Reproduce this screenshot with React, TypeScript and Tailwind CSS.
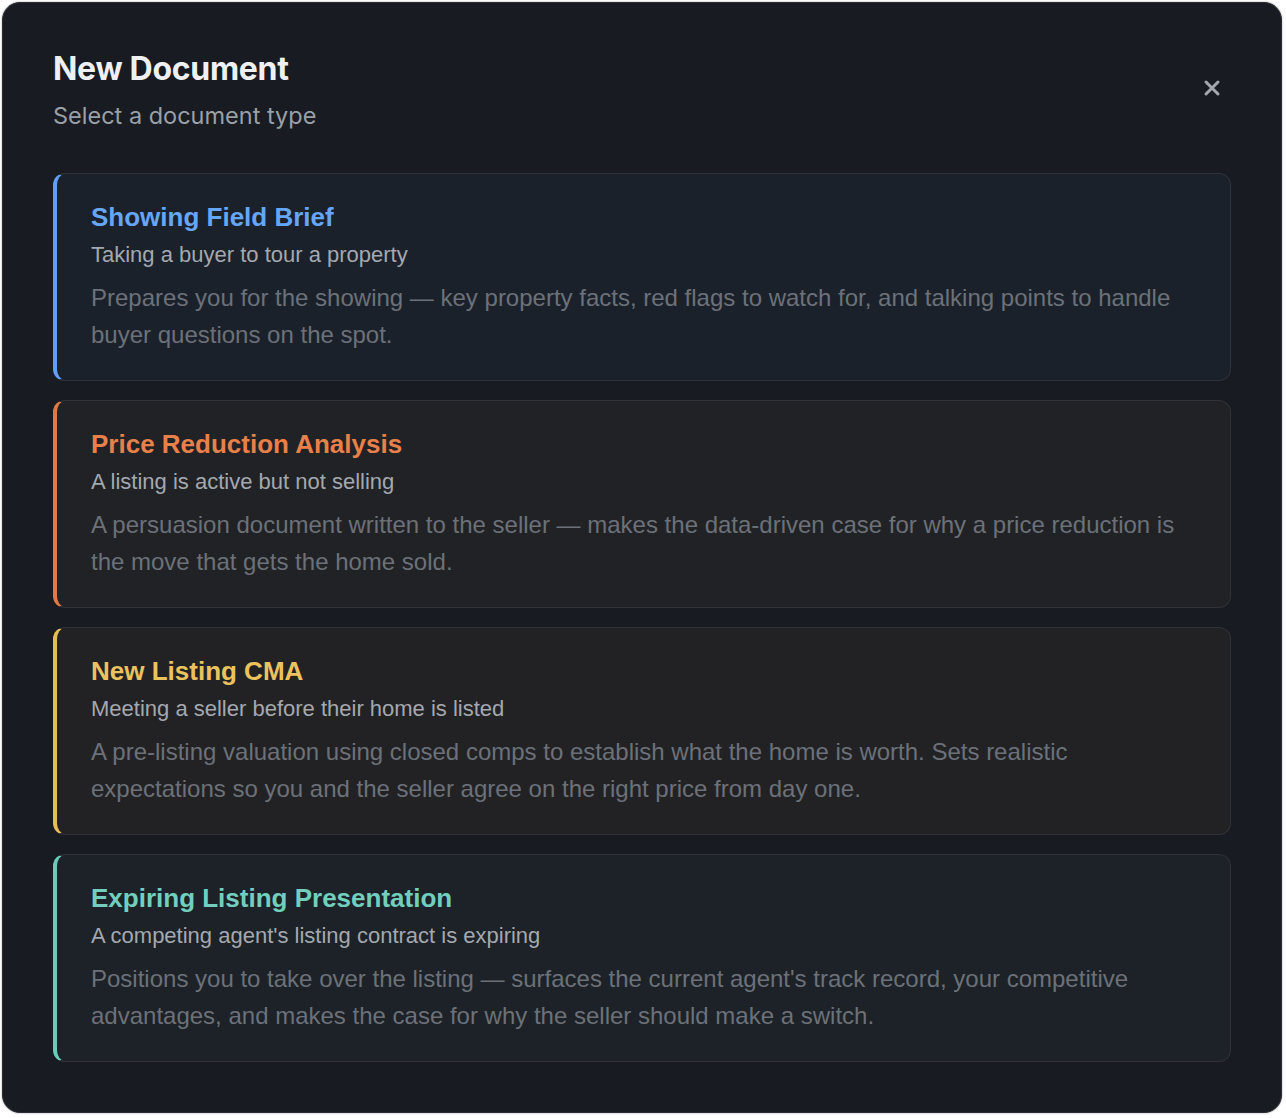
import React from "react";

type Item = {
  title: string;
  sub: string;
  desc: string;
  bar: string;
  text: string;
  bg: string;
};

const items: Item[] = [
  {
    title: "Showing Field Brief",
    sub: "Taking a buyer to tour a property",
    desc: "Prepares you for the showing — key property facts, red flags to watch for, and talking points to handle buyer questions on the spot.",
    bar: "border-l-[#5f9ff5]",
    text: "text-[#66a6f7]",
    bg: "bg-[#1b212b]",
  },
  {
    title: "Price Reduction Analysis",
    sub: "A listing is active but not selling",
    desc: "A persuasion document written to the seller — makes the data-driven case for why a price reduction is the move that gets the home sold.",
    bar: "border-l-[#e07a45]",
    text: "text-[#e8804a]",
    bg: "bg-[#212225]",
  },
  {
    title: "New Listing CMA",
    sub: "Meeting a seller before their home is listed",
    desc: "A pre-listing valuation using closed comps to establish what the home is worth. Sets realistic expectations so you and the seller agree on the right price from day one.",
    bar: "border-l-[#e6bd57]",
    text: "text-[#ebc25e]",
    bg: "bg-[#222225]",
  },
  {
    title: "Expiring Listing Presentation",
    sub: "A competing agent's listing contract is expiring",
    desc: "Positions you to take over the listing — surfaces the current agent's track record, your competitive advantages, and makes the case for why the seller should make a switch.",
    bar: "border-l-[#6ccab9]",
    text: "text-[#72cfbd]",
    bg: "bg-[#1c2227]",
  },
];

export default function App() {
  return (
    <div className="min-h-[1118px] w-full bg-white p-[2px]">
      <div className="relative w-[1280px] rounded-[18px] border border-[#2a2d33] bg-[#181b21] px-[50px] pt-[46px] pb-[50px] shadow-[0_0_2px_rgba(0,0,0,0.4)]">
        <div className="flex items-start justify-between">
          <div>
            <h1 className="font-[family-name:Inter,sans-serif] text-[32px] font-bold leading-[40px] text-[#eef0f3] tracking-[-0.3px]">
              New Document
            </h1>
            <p className="mt-[12px] font-[family-name:Inter,sans-serif] text-[23.5px] leading-[30px] text-[#9aa0a8]">
              Select a document type
            </p>
          </div>
          <button className="mt-[29px] mr-[9px] flex h-[20px] w-[20px] items-center justify-center text-[#a3a8b0]">
            <svg width="18" height="18" viewBox="0 0 18 18" fill="none">
              <path d="M3 3L15 15M15 3L3 15" stroke="currentColor" strokeWidth="3" strokeLinecap="round" />
            </svg>
          </button>
        </div>

        <div className="mt-[42px] flex flex-col gap-[19px]">
          {items.map((it) => (
            <div
              key={it.title}
              className={`rounded-[12px] border border-[#2f3339] border-l-4 ${it.bar} ${it.bg} pl-[34px] pr-[40px] pt-[27px] pb-[27px] font-[family-name:Liberation_Sans,Arial,sans-serif]`}
            >
              <div className={`text-[26px] font-bold leading-[32px] ${it.text}`}>{it.title}</div>
              <div className="mt-[7px] text-[22px] leading-[30px] text-[#a4a8af]">{it.sub}</div>
              <div className="mt-[9px] text-[24px] leading-[37px] text-[#6c7179]">{it.desc}</div>
            </div>
          ))}
        </div>
      </div>
    </div>
  );
}
